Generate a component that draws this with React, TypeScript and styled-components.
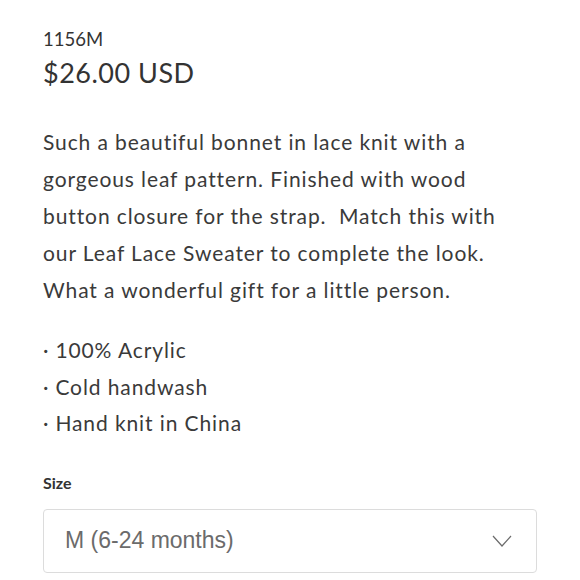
import React from "react";
import styled, { createGlobalStyle } from "styled-components";

const Global = createGlobalStyle`
  html, body { margin: 0; padding: 0; background: #fff; }
  body { font-family: Lato, "Open Sans", sans-serif; color: #3a3a3a; }
`;

const Page = styled.div`
  padding: 27px 43px 0 43px;
  width: 494px;
`;

const Sku = styled.div`
  font-size: 18.5px;
  line-height: 24px;
  color: #333;
`;

const Price = styled.div`
  font-size: 27px;
  letter-spacing: 0.5px;
  line-height: 34px;
  margin-top: 5px;
  color: #333;
`;

const Description = styled.p`
  margin: 33px 0 0 0;
  font-size: 21px;
  letter-spacing: 0.9px;
  line-height: 37px;
  color: #3a3a3a;
  max-width: 472px;
`;

const Bullets = styled.ul`
  list-style: none;
  margin: 24px 0 0 0;
  padding: 0;
  font-size: 21px;
  letter-spacing: 0.9px;
  line-height: 36.5px;
`;

const Bullet = styled.li`
  &::before {
    content: "·";
    margin-right: 6px;
  }
`;

const Label = styled.div`
  margin-top: 30px;
  font-size: 16px;
  font-weight: 700;
  color: #333;
  line-height: 22px;
`;

const Select = styled.div`
  margin-top: 15px;
  height: 64px;
  border: 1px solid #dcdcdc;
  border-radius: 4px;
  display: flex;
  align-items: center;
  justify-content: space-between;
  padding: 0 24px 0 21px;
  box-sizing: border-box;
`;

const SelectText = styled.span`
  font-family: "Liberation Sans", Arial, sans-serif;
  font-size: 23px;
  color: #6b6b6b;
`;

const Chevron = () => (
  <svg width="20" height="12" viewBox="0 0 20 12" fill="none">
    <path d="M1 1 L10 11 L19 1" stroke="#6b6b6b" strokeWidth="1.2" />
  </svg>
);

export default function App() {
  return (
    <>
      <Global />
      <Page>
        <Sku>1156M</Sku>
        <Price>$26.00 USD</Price>
        <Description>
          Such a beautiful bonnet in lace knit with a gorgeous leaf pattern. Finished with wood button closure for the strap.&nbsp; Match this with our Leaf Lace Sweater to complete the look. What a wonderful gift for a little person.
        </Description>
        <Bullets>
          <Bullet>100% Acrylic</Bullet>
          <Bullet>Cold handwash</Bullet>
          <Bullet>Hand knit in China</Bullet>
        </Bullets>
        <Label>Size</Label>
        <Select>
          <SelectText>M (6-24 months)</SelectText>
          <Chevron />
        </Select>
      </Page>
    </>
  );
}
